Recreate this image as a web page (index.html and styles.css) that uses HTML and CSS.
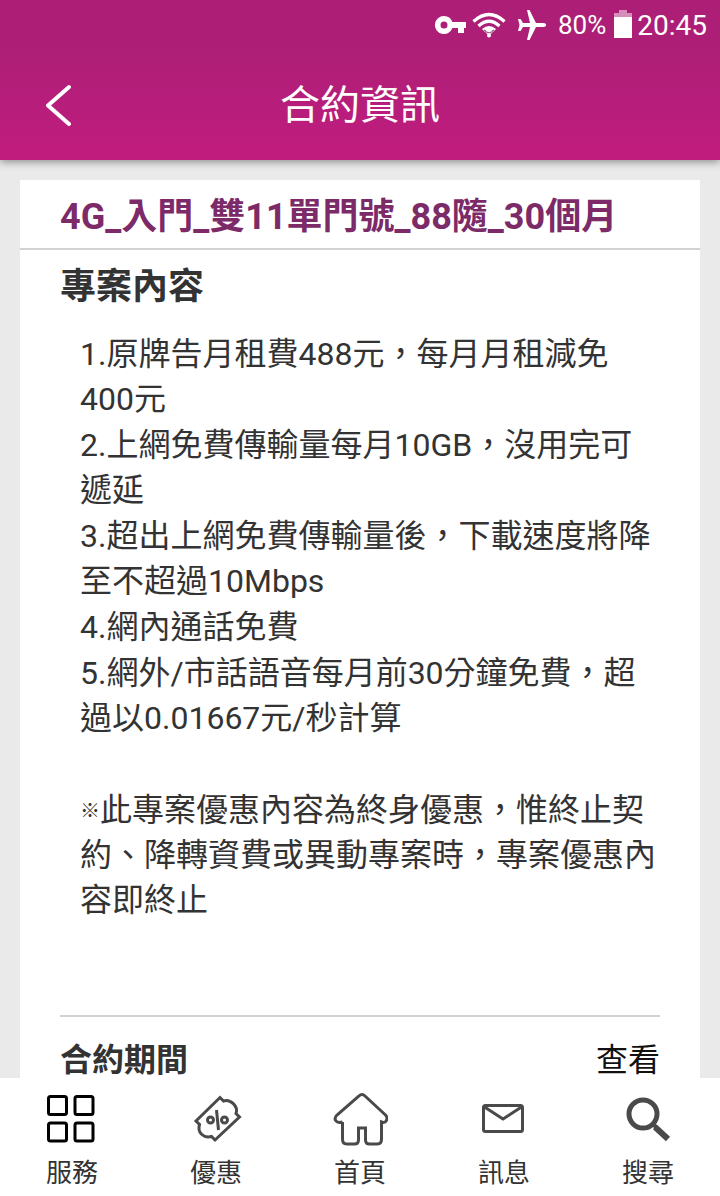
FILE: index.html
```
<!DOCTYPE html>
<html lang="zh-Hant">
<head>
  <meta charset="utf-8">
  <meta name="viewport" content="width=device-width">
  <title>合約資訊</title>
  <link rel="stylesheet" href="styles.css">
</head>
<body>

<header class="top">
  <div class="status">
    <svg class="key" width="32" height="18" viewBox="0 0 32 18">
      <path fill="#fff" fill-rule="evenodd" d="M9 0a9 9 0 0 1 8.400 6H31v6h-2v5h-6v-5h-5.600A9 9 0 1 1 9 0zm0 5.500a3.500 3.500 0 1 0 0 7a3.500 3.500 0 1 0 0-7z"/>
    </svg>
    <svg class="wifi" width="34" height="26" viewBox="0 0 34 26">
      <g fill="none" stroke="#fff" stroke-width="3.200">
        <path d="M1.500 9.500Q17-4.500 32.500 9.500"/>
        <path d="M6.500 14Q17 4.500 27.500 14"/>
      </g>
      <path fill="#fff" d="M10 17q7-6 14 0l-4 4-3 2-3-2z"/>
      <path d="M12 18l2 1v2M22 18l-2 1v2M15 20l2 1 2-1" fill="none" stroke="#7b3a62" stroke-width="1"/>
      <circle cx="17" cy="23.500" r="2" fill="#fff"/>
    </svg>
    <svg class="plane" width="30" height="30" viewBox="0 0 30 30">
      <path fill="#fff" d="M29 15c0 1.200-1 2-2.200 2H19l-6.500 13H10l3-13H6l-2.500 4H1l1.500-6L1 9h2.500L6 13h7L10 0h2.500L19 13h7.800c1.200 0 2.200.800 2.200 2z"/>
    </svg>
    <span class="percent">80%</span>
    <svg class="battery" width="18" height="28" viewBox="0 0 18 28">
      <path fill="#d68fbb" d="M5 0h8v3h5v5H0V3h5z"/>
      <path fill="#fff" d="M0 7h18v21H0z"/>
    </svg>
    <span class="clock">20:45</span>
  </div>
  <div class="titlebar">
    <button class="back" type="button" aria-label="返回">
      <svg width="28" height="44" viewBox="0 0 28 44">
        <path d="M23 4L2 22.500 23 41" fill="none" stroke="#fff" stroke-width="4" stroke-linecap="round" stroke-linejoin="round"/>
      </svg>
    </button>
    <h1>合約資訊</h1>
  </div>
</header>

<main class="page">
  <article class="card">
    <h2 class="plan">4G_入門_雙11單門號_88隨_30個月</h2>
    <section class="content">
      <h3>專案內容</h3>
      <ul class="terms">
        <li>1.原牌告月租費488元，每月月租減免400元</li>
        <li>2.上網免費傳輸量每月10GB，沒用完可遞延</li>
        <li>3.超出上網免費傳輸量後，下載速度將降至不超過10Mbps</li>
        <li>4.網內通話免費</li>
        <li>5.網外/市話語音每月前30分鐘免費，超過以0.01667元/秒計算</li>
      </ul>
      <p class="note"><span class="mark">※</span>此專案優惠內容為終身優惠，惟終止契約、降轉資費或異動專案時，專案優惠內容即終止</p>
    </section>
    <section class="period">
      <h3>合約期間</h3>
      <a href="#period">查看</a>
    </section>
  </article>
</main>

<nav class="tabs">
  <a href="#service">
    <svg width="56" height="56" viewBox="0 0 56 56">
      <g fill="none" stroke="#000" stroke-width="3">
        <rect x="4.500" y="6.500" width="18" height="18" rx="2"/>
        <rect x="31" y="6.500" width="18" height="18" rx="2"/>
        <rect x="4.500" y="33" width="18" height="18" rx="2"/>
        <rect x="31" y="33" width="18" height="18" rx="2"/>
      </g>
    </svg>
    服務
  </a>
  <a href="#offers">
    <svg width="56" height="56" viewBox="0 0 56 56">
      <g fill="none" stroke="#4a4a4a" stroke-width="3">
        <path d="M32 7.500l3.500 3.500c7-2 15 5 12.500 12.500l3.500 3.500L27 50l-3.500-3.500c-8 2-14.500-4-12-12L8 31z"/>
        <circle cx="22.500" cy="30" r="3"/>
        <circle cx="36.500" cy="30" r="3"/>
        <path d="M28.500 20l2 20"/>
      </g>
    </svg>
    優惠
  </a>
  <a href="#home">
    <svg width="56" height="56" viewBox="0 0 56 56">
      <path d="M10.500 32v17q0 5 4 5h8q4 0 4-4V38h7v12q0 4 4 4h8q4 0 4-5V32c5 2 7-4 4-7L33 6q-3-3-6 0L5 25c-4 4-1 9 5.500 7" fill="none" stroke="#4a4a4a" stroke-width="3"/>
    </svg>
    首頁
  </a>
  <a href="#messages">
    <svg width="56" height="56" viewBox="0 0 56 56">
      <g fill="none" stroke="#4a4a4a" stroke-width="3">
        <rect x="7.500" y="15.500" width="39" height="26" rx="2"/>
        <path d="M8.500 17L27 29l18.500-12"/>
      </g>
    </svg>
    訊息
  </a>
  <a href="#search">
    <svg width="56" height="56" viewBox="0 0 56 56">
      <g fill="none" stroke="#4a4a4a">
        <circle cx="23" cy="24" r="14" stroke-width="5"/>
        <path d="M33 34l3 3" stroke-width="4"/>
        <path d="M35 37l13 12" stroke-width="6"/>
      </g>
    </svg>
    搜尋
  </a>
</nav>

</body>
</html>
```
FILE: styles.css
```
* {
  box-sizing: border-box;
}
body {
  margin: 0;
  height: 100vh;
  display: flex;
  flex-direction: column;
  background: #eaeaea;
  color: #333;
  font-family: Roboto, "Noto Sans CJK TC", sans-serif;
}
h1, h2, h3, p, ul {
  margin: 0;
  padding: 0;
}
a {
  color: inherit;
  text-decoration: none;
}
svg {
  display: block;
  flex: none;
}

/* header */
.top {
  position: relative;
  flex: none;
  background: linear-gradient(#ad1f77 30%, #c11c7e);
  box-shadow: 0 2px 8px rgba(0,0,0,0.4);
  color: #fff;
}
.status {
  display: flex;
  align-items: center;
  justify-content: flex-end;
  height: 50px;
  padding-right: 13px;
}
.wifi {
  margin-left: 5px;
}
.plane {
  margin: 0 11px;
}
.percent {
  font-size: 26px;
}
.battery {
  margin: 0 5px 2px 8px;
}
.clock {
  font-size: 28px;
}
.titlebar {
  display: grid;
  grid-template-columns: 120px 1fr 120px;
  align-items: center;
  height: 110px;
}
.back {
  justify-self: center;
  padding: 0;
  border: 0;
  background: none;
}
.titlebar h1 {
  padding-top: 2px;
  font-size: 40px;
  font-weight: 400;
  line-height: 50px;
  text-align: center;
}

/* contract card */
.page {
  flex: 1;
  min-height: 0;
  overflow-y: auto;
  scrollbar-width: none;
  padding: 20px 20px 0;
}
.card {
  background: #fff;
}
.plan {
  padding: 12px 40px 6px;
  border-bottom: 2px solid #d2d2d2;
  color: #7d2a68;
  font-size: 36px;
  line-height: 50px;
}
.content {
  margin: 0 40px;
  padding: 12px 0 92px;
  border-bottom: 2px solid #d2d2d2;
}
.content h3 {
  font-size: 36px;
  line-height: 50px;
}
.terms,
.note {
  padding-left: 20px;
  font-size: 32px;
  line-height: 45px;
}
.terms {
  display: flex;
  flex-direction: column;
  gap: 1px;
  margin: 20px 0 47px;
  list-style: none;
}
.mark {
  font-size: 20px;
  font-weight: 700;
  line-height: 20px;
  vertical-align: 3px;
}
.period {
  display: flex;
  justify-content: space-between;
  padding: 18px 40px;
  font-size: 32px;
  line-height: 50px;
}
.period h3 {
  font-size: 32px;
}
.period a {
  color: #111;
}

/* bottom tabs */
.tabs {
  flex: none;
  display: flex;
  height: 118px;
  padding-top: 12px;
  background: #fff;
}
.tabs a {
  flex: 1;
  display: flex;
  flex-direction: column;
  align-items: center;
  gap: 4px;
  font-size: 26px;
  line-height: 46px;
}
```
